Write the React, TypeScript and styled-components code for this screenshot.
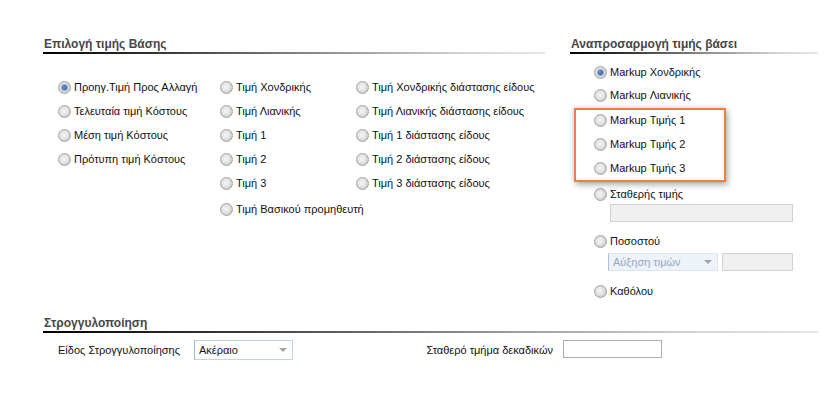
import styled, { createGlobalStyle } from "styled-components";

const GlobalStyle = createGlobalStyle`
  body {
    margin: 0;
    background: #ffffff;
    font-family: "Liberation Sans", Arial, sans-serif;
    font-size: 11px;
    color: #111;
  }
`;

const Page = styled.div`
  width: 830px;
  height: 407px;
  box-sizing: border-box;
  padding: 36px 0 0 43px;
`;

const TopRow = styled.div`
  display: flex;
  gap: 25px;
  align-items: flex-start;
`;

const Section = styled.div<{ $width: number }>`
  width: ${(p) => p.$width}px;
`;

const Header = styled.div`
  height: 16px;
  line-height: 16px;
  font-size: 12px;
  font-weight: bold;
  color: #474747;
  padding-left: 1px;
  position: relative;
  &::after {
    content: "";
    position: absolute;
    left: 0;
    right: 0;
    top: 16px;
    height: 2px;
    background: linear-gradient(90deg, #000 0%, #3a3a3a 25%, #9a9a9a 60%, #d6d6d6 85%, #e6e6e6 100%);
  }
`;

const Columns = styled.div`
  display: grid;
  grid-template-columns: 162px 136px 1fr;
  margin-top: 23px;
  padding-left: 15px;
`;

const Column = styled.div`
  display: flex;
  flex-direction: column;
`;

const RadioRow = styled.label<{ $h?: number; $mt?: number }>`
  display: flex;
  align-items: center;
  gap: 3px;
  height: ${(p) => p.$h ?? 24}px;
  margin-top: ${(p) => p.$mt ?? 0}px;
  white-space: nowrap;
  color: #111;
`;

const RadioDot = styled.span<{ $checked?: boolean }>`
  width: 13px;
  height: 13px;
  box-sizing: border-box;
  border-radius: 50%;
  border: 1px solid #a4a4a4;
  background: radial-gradient(circle at 45% 45%, #f6f6f6 0%, #e2e2e2 45%, #c4c4c4 80%, #b6b6b6 100%);
  display: flex;
  align-items: center;
  justify-content: center;
  flex-shrink: 0;
  &::after {
    content: "";
    width: 5px;
    height: 5px;
    border-radius: 50%;
    display: ${(p) => (p.$checked ? "block" : "none")};
    background: radial-gradient(circle at 40% 40%, #6b8fc9, #264f8f);
    box-shadow: 0 0 0 1px #8aa9d6;
  }
`;

const RightBody = styled.div`
  display: flex;
  flex-direction: column;
  padding-left: 24px;
  margin-top: 8px;
`;

const HighlightGroup = styled.div`
  position: relative;
  margin-top: 1px;
  &::after {
    content: "";
    position: absolute;
    left: -20px;
    width: 152px;
    top: 0;
    bottom: -2px;
    box-sizing: border-box;
    border: 2px solid #f57c3d;
    box-shadow: 2px 3px 6px rgba(0, 0, 0, 0.3), -1px -1px 4px rgba(0, 0, 0, 0.12);
    pointer-events: none;
  }
`;

const TextBox = styled.div<{ $w: number; $disabled?: boolean; $mt?: number; $ml?: number }>`
  width: ${(p) => p.$w}px;
  height: 18px;
  box-sizing: border-box;
  margin-top: ${(p) => p.$mt ?? 0}px;
  margin-left: ${(p) => p.$ml ?? 0}px;
  border: 1px solid ${(p) => (p.$disabled ? "#d2d2d2" : "#abadb3")};
  background: ${(p) => (p.$disabled ? "#f0f0f0" : "#ffffff")};
`;

const ComboRow = styled.div`
  display: flex;
  gap: 4px;
  margin-top: 1px;
  margin-left: 14px;
`;

const Combo = styled.div<{ $w: number; $h: number; $disabled?: boolean }>`
  width: ${(p) => p.$w}px;
  height: ${(p) => p.$h}px;
  box-sizing: border-box;
  display: flex;
  align-items: center;
  justify-content: space-between;
  padding: 0 5px 0 4px;
  border: 1px solid ${(p) => (p.$disabled ? "#dbe5f1" : "#c3d2e4")};
  border-left-color: ${(p) => (p.$disabled ? "#a9bfdc" : "#9db5d6")};
  background: ${(p) => (p.$disabled ? "#eef3fa" : "#ffffff")};
  color: ${(p) => (p.$disabled ? "#97a6bf" : "#111")};
`;

const Arrow = styled.span`
  width: 0;
  height: 0;
  border-left: 4px solid transparent;
  border-right: 4px solid transparent;
  border-top: 4px solid #a2a2a2;
`;

const BottomSection = styled.div`
  width: 775px;
  margin-top: 13px;
`;

const BottomRow = styled.div`
  display: flex;
  align-items: center;
  padding-left: 15px;
  margin-top: 8px;
  height: 22px;
`;

const FieldLabel = styled.span<{ $w: number; $align?: string; $ml?: number }>`
  width: ${(p) => p.$w}px;
  margin-left: ${(p) => p.$ml ?? 0}px;
  text-align: ${(p) => p.$align ?? "left"};
  white-space: nowrap;
  color: #111;
`;

function Radio({ label, checked, h, mt }: { label: string; checked?: boolean; h?: number; mt?: number }) {
  return (
    <RadioRow $h={h} $mt={mt}>
      <RadioDot $checked={checked} />
      <span>{label}</span>
    </RadioRow>
  );
}

export default function App() {
  return (
    <>
      <GlobalStyle />
      <Page>
        <TopRow>
          <Section $width={502}>
            <Header>Επιλογή τιμής Βάσης</Header>
            <Columns>
              <Column>
                <Radio label="Προηγ.Τιμή Προς Αλλαγή" checked />
                <Radio label="Τελευταία τιμή Κόστους" />
                <Radio label="Μέση τιμή Κόστους" />
                <Radio label="Πρότυπη τιμή Κόστους" />
              </Column>
              <Column>
                <Radio label="Τιμή Χονδρικής" />
                <Radio label="Τιμή Λιανικής" />
                <Radio label="Τιμή 1" />
                <Radio label="Τιμή 2" />
                <Radio label="Τιμή 3" />
                <Radio label="Τιμή Βασικού προμηθευτή" mt={2} />
              </Column>
              <Column>
                <Radio label="Τιμή Χονδρικής διάστασης είδους" />
                <Radio label="Τιμή Λιανικής διάστασης είδους" />
                <Radio label="Τιμή 1 διάστασης είδους" />
                <Radio label="Τιμή 2 διάστασης είδους" />
                <Radio label="Τιμή 3 διάστασης είδους" />
              </Column>
            </Columns>
          </Section>
          <Section $width={248}>
            <Header>Αναπροσαρμογή τιμής βάσει</Header>
            <RightBody>
              <Radio label="Markup Χονδρικής" checked />
              <Radio label="Markup Λιανικής" mt={-1} />
              <HighlightGroup>
                <Radio label="Markup Τιμής 1" />
                <Radio label="Markup Τιμής 2" />
                <Radio label="Markup Τιμής 3" />
              </HighlightGroup>
              <Radio label="Σταθερής τιμής" h={22} mt={3} />
              <TextBox $w={183} $disabled $mt={-1} $ml={16} />
              <Radio label="Ποσοστού" h={22} mt={8} />
              <ComboRow>
                <Combo $w={110} $h={18} $disabled>
                  <span>Αύξηση τιμών</span>
                  <Arrow />
                </Combo>
                <TextBox $w={71} $disabled />
              </ComboRow>
              <Radio label="Καθόλου" h={22} mt={9} />
            </RightBody>
          </Section>
        </TopRow>
        <BottomSection>
          <Header>Στρογγυλοποίηση</Header>
          <BottomRow>
            <FieldLabel $w={136}>Είδος Στρογγυλοποίησης</FieldLabel>
            <Combo $w={99} $h={20}>
              <span>Ακέραιο</span>
              <Arrow />
            </Combo>
            <FieldLabel $w={133} $align="right" $ml={127}>
              Σταθερό τμήμα δεκαδικών
            </FieldLabel>
            <TextBox $w={99} $ml={10} $mt={-3} />
          </BottomRow>
        </BottomSection>
      </Page>
    </>
  );
}
